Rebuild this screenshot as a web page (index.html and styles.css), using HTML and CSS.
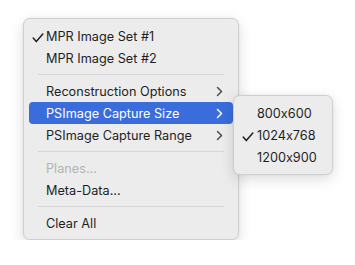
FILE: index.html
```html
<!DOCTYPE html>
<html lang="en">
<head>
  <meta charset="UTF-8">
  <title>Context menu</title>
  <link rel="stylesheet" href="styles.css">
</head>
<body>
<div class="stage">
  <ul class="menu">
    <li class="item"><svg class="check" width="12" height="10" viewBox="0 0 12 10"><path d="M1.2 5 L4.3 8.6 L10.8 1" fill="none" stroke="currentColor" stroke-width="1.5" stroke-linecap="round" stroke-linejoin="round"/></svg>MPR Image Set #1</li>
    <li class="item">MPR Image Set #2</li>
    <li class="sep"></li>
    <li class="item has-sub">Reconstruction Options<span class="chev"><svg width="7" height="11" viewBox="0 0 7 11"><path d="M1.5 1.5 L5.5 5.5 L1.5 9.5" fill="none" stroke="currentColor" stroke-width="1.5" stroke-linecap="round" stroke-linejoin="round"/></svg></span></li>
    <li class="item has-sub active">PSImage Capture Size<span class="chev"><svg width="7" height="11" viewBox="0 0 7 11"><path d="M1.5 1.5 L5.5 5.5 L1.5 9.5" fill="none" stroke="currentColor" stroke-width="1.5" stroke-linecap="round" stroke-linejoin="round"/></svg></span></li>
    <li class="item has-sub">PSImage Capture Range<span class="chev"><svg width="7" height="11" viewBox="0 0 7 11"><path d="M1.5 1.5 L5.5 5.5 L1.5 9.5" fill="none" stroke="currentColor" stroke-width="1.5" stroke-linecap="round" stroke-linejoin="round"/></svg></span></li>
    <li class="sep"></li>
    <li class="item disabled">Planes...</li>
    <li class="item">Meta-Data...</li>
    <li class="sep"></li>
    <li class="item">Clear All</li>
  </ul>
  <ul class="menu submenu">
    <li class="item">800x600</li>
    <li class="item"><svg class="check" width="12" height="10" viewBox="0 0 12 10"><path d="M1.2 5 L4.3 8.6 L10.8 1" fill="none" stroke="currentColor" stroke-width="1.5" stroke-linecap="round" stroke-linejoin="round"/></svg>1024x768</li>
    <li class="item">1200x900</li>
  </ul>
</div>
</body>
</html>
```

FILE: styles.css
```css
html,
body {
  margin: 0;
  background: #ffffff;
  font-family: 'Inter', 'Liberation Sans', sans-serif;
  font-feature-settings: "calt" 0;
}
.stage {
  position: relative;
  padding: 18px 0 0 23px;
}
ul {
  margin: 0;
  padding: 0;
  list-style: none;
}
.menu {
  width: 216px;
  box-sizing: border-box;
  padding: 6px 5px 5px;
  background: #ececec;
  border: 1px solid #cfcfcf;
  border-radius: 7px;
  box-shadow: 0 4px 14px rgba(0, 0, 0, 0.14), 0 0 2px rgba(0, 0, 0, 0.08);
}
.item {
  position: relative;
  display: flex;
  align-items: center;
  height: 22px;
  padding-left: 17px;
  font-size: 12.7px;
  color: #1f1f1f;
  border-radius: 4px;
}
.check {
  position: absolute;
  left: 3px;
  top: 8px;
}
.chev {
  margin-left: auto;
  margin-right: 10px;
  display: flex;
  color: #4a4a4a;
}
.active {
  background: #3a6ddb;
  color: #ffffff;
}
.active .chev {
  color: #ffffff;
}
.disabled {
  color: #b3b3b3;
}
.sep {
  height: 1px;
  margin: 5px 9px;
  background: #d6d6d6;
}
.submenu {
  position: absolute;
  left: 233px;
  top: 95px;
  width: 100px;
  padding: 6px 5px;
}
.submenu .item {
  padding-left: 18px;
}
```
